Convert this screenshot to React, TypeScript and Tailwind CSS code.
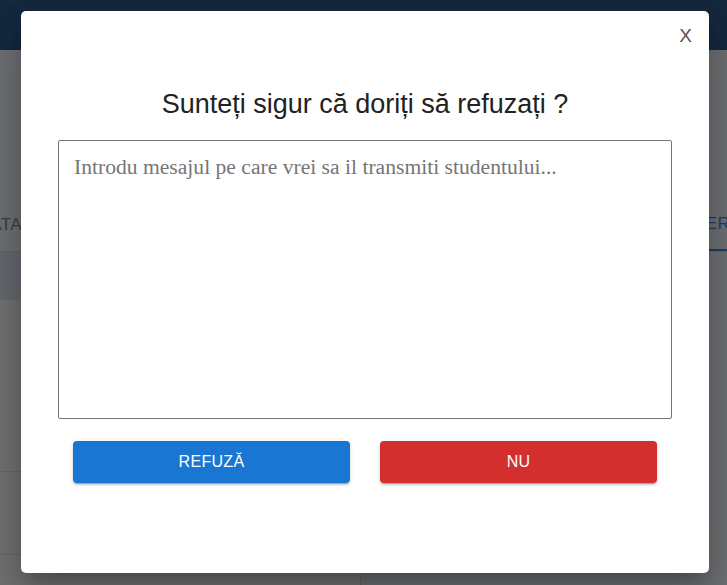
import React from 'react';

function PageBehind() {
  return (
    <div className="h-[585px] w-[727px] overflow-hidden bg-[#dde1e6] font-['Liberation_Sans',Arial,sans-serif]">
      <header className="h-[50px] bg-[#2a527e]" />
      <div className="h-[150px]" />
      <div className="flex h-[52px] items-end justify-between border-b border-[#c4c8ce]">
        <div className="flex w-[22px] justify-end overflow-hidden whitespace-nowrap pb-[14px] text-[17px] tracking-wide text-[#767f8e]">
          ACCEPTATA
        </div>
        <div className="w-[34px] overflow-hidden whitespace-nowrap border-b-2 border-[#3a7ed6] pb-[13px] text-[17px] tracking-wide text-[#3a7ed6]">
          CERERI
        </div>
      </div>
      <div className="grid grid-cols-[361px_1fr]">
        <div className="flex flex-col">
          <div className="h-[48px] bg-[#ccd4de]" />
          <div className="flex h-[300px] flex-col border-r border-[#c8c8c8] bg-[#e4e4e4]">
            <div className="h-[172px] border-b border-[#cfcfcf]" />
            <div className="h-[83px] border-b border-[#cfcfcf]" />
          </div>
        </div>
        <div />
      </div>
    </div>
  );
}

export default function App() {
  return (
    <div className="relative h-[585px] w-[727px] overflow-hidden">
      <PageBehind />
      <div className="absolute inset-0 bg-black/50">
        <div className="absolute left-[21px] top-[11px] flex h-[562px] w-[688px] flex-col rounded-[5px] bg-white shadow-[0_11px_15px_-7px_rgba(0,0,0,0.2),0_24px_38px_3px_rgba(0,0,0,0.14),0_9px_46px_8px_rgba(0,0,0,0.12)] font-['Liberation_Sans',Arial,sans-serif]">
          <div className="flex justify-end pr-[17px] pt-[12px]">
            <button className="text-[19px] leading-[26px] text-[#555]">X</button>
          </div>
          <h2 className="mt-[39px] text-center text-[27px] leading-[32px] text-[#222]">
            Sunteți sigur că doriți să refuzați ?
          </h2>
          <div className="mx-[37px] mt-[20px]">
            <textarea
              className="block h-[279px] w-full resize-none rounded-[2px] border border-[#767676] px-[15px] py-[13px] font-['Liberation_Serif','Times_New_Roman',serif] text-[21.6px] leading-[26px] text-[#222] outline-none placeholder:text-[#767676]"
              placeholder="Introdu mesajul pe care vrei sa il transmiti studentului..."
            />
          </div>
          <div className="mx-[37px] mt-[22px] grid grid-cols-2 gap-[30px] px-[15px]">
            <button className="h-[42px] rounded-[4px] bg-[#1976d2] text-[16px] tracking-[0.3px] text-white shadow-[0_3px_1px_-2px_rgba(0,0,0,0.2),0_2px_2px_0_rgba(0,0,0,0.14),0_1px_5px_0_rgba(0,0,0,0.12)]">
              REFUZĂ
            </button>
            <button className="h-[42px] rounded-[4px] bg-[#d32f2f] text-[16px] tracking-[0.3px] text-white shadow-[0_3px_1px_-2px_rgba(0,0,0,0.2),0_2px_2px_0_rgba(0,0,0,0.14),0_1px_5px_0_rgba(0,0,0,0.12)]">
              NU
            </button>
          </div>
        </div>
      </div>
    </div>
  );
}
